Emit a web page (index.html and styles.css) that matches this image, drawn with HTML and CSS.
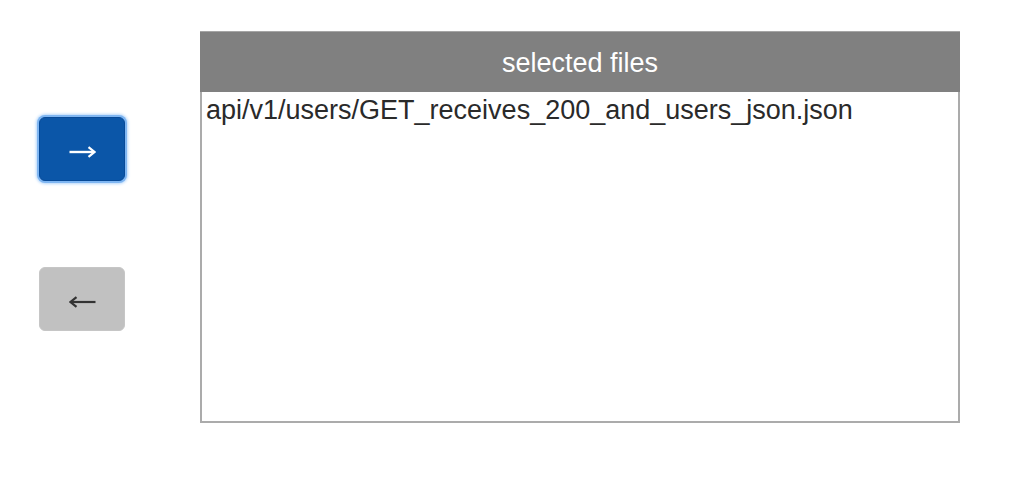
FILE: index.html
```html
<!DOCTYPE html>
<html>
<head>
<meta charset="utf-8">
<link rel="stylesheet" href="styles.css">
</head>
<body>
<div class="page">
  <div class="controls">
    <button class="move move-right" aria-label="→">
      <svg class="arrow" width="27" height="12" viewBox="0 0 27 12"><path d="M0.5 6H25" fill="none" stroke="currentColor" stroke-width="2.4"/><path d="M19.5 1.2L25.5 6L19.5 10.8" fill="none" stroke="currentColor" stroke-width="2.2" stroke-linejoin="miter"/></svg>
    </button>
    <button class="move move-left" aria-label="←">
      <svg class="arrow" width="27" height="12" viewBox="0 0 27 12"><path d="M2 6H26.5" fill="none" stroke="currentColor" stroke-width="2.2"/><path d="M7.5 1.2L1.5 6L7.5 10.8" fill="none" stroke="currentColor" stroke-width="2.2" stroke-linejoin="miter"/></svg>
    </button>
  </div>
  <div class="panel">
    <div class="panel-header">selected files</div>
    <div class="panel-list">
      <div class="item">api/v1/users/GET_receives_200_and_users_json.json</div>
    </div>
  </div>
</div>
</body>
</html>
```
FILE: styles.css
```css
html, body {
  margin: 0;
  padding: 0;
  background: #ffffff;
}
body {
  font-family: "Liberation Sans", Arial, sans-serif;
}
.page {
  display: flex;
  align-items: flex-start;
  padding: 31px 0 0 39px;
  gap: 75px;
}
.controls {
  display: flex;
  flex-direction: column;
  padding-top: 86px;
  gap: 86px;
}
.move {
  width: 86px;
  height: 64px;
  border-radius: 6px;
  padding: 5px 0 0 0;
  display: flex;
  align-items: center;
  justify-content: center;
  cursor: pointer;
}
.arrow {
  display: block;
}
.move-right {
  background: #0b56a8;
  color: #ffffff;
  border: 1px solid #074a98;
  box-shadow: 0 0 0 2px #7fb6f2, 0 0 3px 3px #b5d6fa;
}
.move-left {
  background: #c1c1c1;
  color: #333333;
  border: 1px solid #c6c6c6;
}
.panel {
  width: 760px;
  height: 392px;
  box-sizing: border-box;
  border: 2px solid #ababab;
  border-top: none;
  display: flex;
  flex-direction: column;
}
.panel-header {
  margin: 0 -2px;
  height: 61px;
  background: #808080;
  border-top: 1px solid #a5a5a5;
  color: #ffffff;
  font-size: 27px;
  display: flex;
  align-items: center;
  justify-content: center;
  padding-top: 2px;
  box-sizing: border-box;
}
.panel-list {
  flex: 1;
  padding: 3px 4px;
}
.item {
  font-size: 27px;
  color: #2a2a2a;
  line-height: 31px;
}
```
